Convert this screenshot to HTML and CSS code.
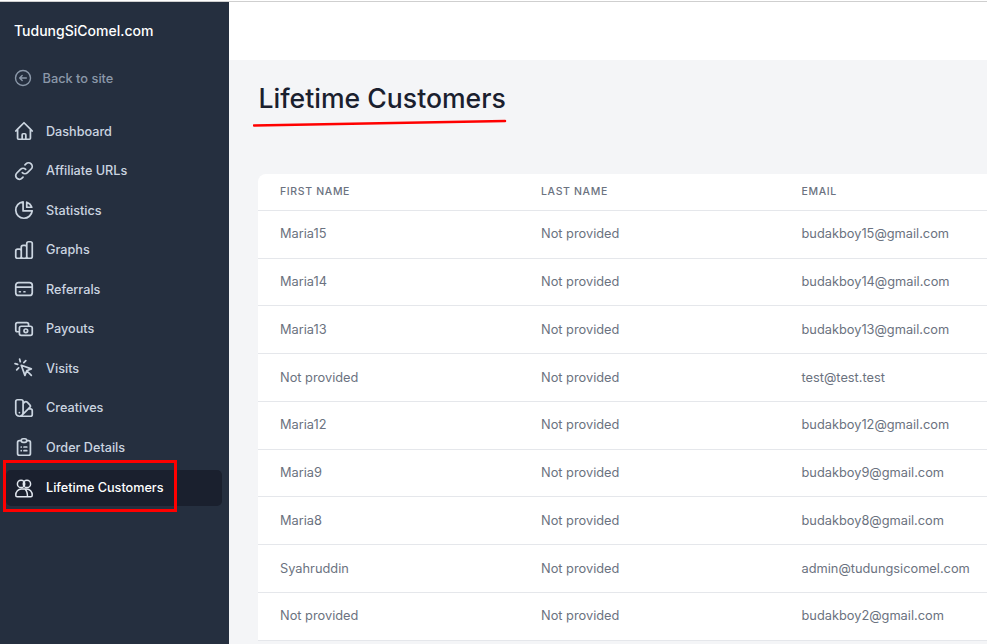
FILE: index.html
```html
<!DOCTYPE html>
<html lang="en">
<head>
<meta charset="utf-8">
<title>Lifetime Customers</title>
<link rel="stylesheet" href="styles.css">
</head>
<body>
<div class="app">
  <aside class="sidebar">
    <div class="brand">TudungSiComel.com</div>
    <a class="back"><svg class="icon back-icon" viewBox="0 0 24 24"><path d="M11 15l-3-3m0 0l3-3m-3 3h8M3 12a9 9 0 1118 0 9 9 0 01-18 0z"/></svg><span>Back to site</span></a>
    <nav class="nav">
      <a class="item"><svg class="icon" viewBox="0 0 24 24"><path d="M3 12l2-2m0 0l7-7 7 7M5 10v10a1 1 0 001 1h3m10-11l2 2m-2-2v10a1 1 0 01-1 1h-3m-6 0a1 1 0 001-1v-4a1 1 0 011-1h2a1 1 0 011 1v4a1 1 0 001 1m-6 0h6"/></svg><span>Dashboard</span></a>
      <a class="item"><svg class="icon" viewBox="0 0 24 24"><path d="M13.828 10.172a4 4 0 00-5.656 0l-4 4a4 4 0 105.656 5.656l1.102-1.101m-.758-4.899a4 4 0 005.656 0l4-4a4 4 0 00-5.656-5.656l-1.100 1.100"/></svg><span>Affiliate URLs</span></a>
      <a class="item"><svg class="icon" viewBox="0 0 24 24"><path d="M11 3.055A9.001 9.001 0 1020.945 13H11V3.055z"/><path d="M20.488 9H15V3.512A9.025 9.025 0 0120.488 9z"/></svg><span>Statistics</span></a>
      <a class="item"><svg class="icon" viewBox="0 0 24 24"><path d="M9 19v-6a2 2 0 00-2-2H5a2 2 0 00-2 2v6a2 2 0 002 2h2a2 2 0 002-2zm0 0V9a2 2 0 012-2h2a2 2 0 012 2v10m-6 0a2 2 0 002 2h2a2 2 0 002-2m0 0V5a2 2 0 012-2h2a2 2 0 012 2v14a2 2 0 01-2 2h-2a2 2 0 01-2-2z"/></svg><span>Graphs</span></a>
      <a class="item"><svg class="icon" viewBox="0 0 24 24"><path d="M3 10h18M7 15h1m4 0h1m-7 4h12a3 3 0 003-3V8a3 3 0 00-3-3H6a3 3 0 00-3 3v8a3 3 0 003 3z"/></svg><span>Referrals</span></a>
      <a class="item"><svg class="icon" viewBox="0 0 24 24"><path d="M17 9V7a2 2 0 00-2-2H5a2 2 0 00-2 2v6a2 2 0 002 2h2m2 4h10a2 2 0 002-2v-6a2 2 0 00-2-2H9a2 2 0 00-2 2v6a2 2 0 002 2zm7-5a2 2 0 11-4 0 2 2 0 014 0z"/></svg><span>Payouts</span></a>
      <a class="item"><svg class="icon" viewBox="0 0 24 24"><path d="M15 15l-2 5L9 9l11 4-5 2zm0 0l5 5M7.188 2.239l.777 2.897M5.136 7.965l-2.898-.777M13.950 4.050l-2.122 2.122m-5.657 5.656l-2.120 2.122"/></svg><span>Visits</span></a>
      <a class="item"><svg class="icon" viewBox="0 0 24 24"><path d="M7 21a4 4 0 01-4-4V5a2 2 0 012-2h4a2 2 0 012 2v12a4 4 0 01-4 4zm0 0h12a2 2 0 002-2v-4a2 2 0 00-2-2h-2.343M11 7.343l1.657-1.657a2 2 0 012.828 0l2.829 2.829a2 2 0 010 2.828l-8.486 8.485M7 17h.01"/></svg><span>Creatives</span></a>
      <a class="item"><svg class="icon" viewBox="0 0 24 24"><path d="M9 5H7a2 2 0 00-2 2v12a2 2 0 002 2h10a2 2 0 002-2V7a2 2 0 00-2-2h-2M9 5a2 2 0 002 2h2a2 2 0 002-2M9 5a2 2 0 012-2h2a2 2 0 012 2m-3 7h3m-3 4h3m-6-4h.01M9 16h.01"/></svg><span>Order Details</span></a>
      <a class="item active"><svg class="icon icon-thin" viewBox="0 0 24 24"><circle cx="8.800" cy="7.500" r="4"/><circle cx="15.200" cy="7.500" r="4"/><path d="M3 19.800c0-3.800 2.800-6.800 6-6.800h6c3.200 0 6 3 6 6.800 0 1-.6 1.700-1.500 1.700h-15c-.9 0-1.500-.7-1.500-1.700zM13.500 13.500c1.700 1.800 2.300 4.500 2.300 8"/></svg><span>Lifetime Customers</span></a>
    </nav>
  </aside>
  <main class="main">
    <div class="topbar"></div>
    <section class="content">
      <h1 class="title">Lifetime Customers</h1>
      <div class="card">
        <table class="table">
          <colgroup><col class="col-first"><col class="col-last"><col></colgroup>
          <thead><tr><th>First name</th><th>Last name</th><th>Email</th></tr></thead>
          <tbody>
            <tr><td>Maria15</td><td>Not provided</td><td>budakboy15@gmail.com</td></tr>
            <tr><td>Maria14</td><td>Not provided</td><td>budakboy14@gmail.com</td></tr>
            <tr><td>Maria13</td><td>Not provided</td><td>budakboy13@gmail.com</td></tr>
            <tr><td>Not provided</td><td>Not provided</td><td>test@test.test</td></tr>
            <tr><td>Maria12</td><td>Not provided</td><td>budakboy12@gmail.com</td></tr>
            <tr><td>Maria9</td><td>Not provided</td><td>budakboy9@gmail.com</td></tr>
            <tr><td>Maria8</td><td>Not provided</td><td>budakboy8@gmail.com</td></tr>
            <tr><td>Syahruddin</td><td>Not provided</td><td>admin@tudungsicomel.com</td></tr>
            <tr><td>Not provided</td><td>Not provided</td><td>budakboy2@gmail.com</td></tr>
          </tbody>
        </table>
      </div>
    </section>
  </main>
</div>
<div class="mark-box"></div>
<svg class="mark-line" viewBox="0 0 256 8"><path d="M1 6.500L254 2"/></svg>
</body>
</html>
```
FILE: styles.css
```css
* { box-sizing: border-box; }
html, body { margin: 0; height: 100%; overflow: hidden; }
body { font-family: Inter, "Liberation Sans", sans-serif; background: #fff; }
.app { display: flex; height: 642px; width: 987px; overflow: hidden; margin-top: 2px; box-shadow: 0 -1px 0 #cfcfcf; }
.sidebar { width: 229px; flex: none; background: #252f3f; padding: 0 7px 0 6px; }
.brand { color: #fff; font-size: 14px; font-weight: 500; line-height: 20px; padding: 19px 0 0 8px; }
.back { display: flex; align-items: center; gap: 10px; margin-top: 27px; padding-left: 6.500px; height: 20px; color: #8b98a9; font-size: 12.800px; font-weight: 500; }
.icon { width: 22px; height: 22px; flex: none; fill: none; stroke: #cbd5e0; stroke-width: 1.900; stroke-linecap: round; stroke-linejoin: round; }
.back-icon { width: 20px; height: 20px; stroke: #8b98a9; stroke-width: 1.700; }
.nav { margin-top: 23.500px; display: flex; flex-direction: column; }
.item { display: flex; align-items: center; gap: 11px; height: 39.500px; padding-left: 7px; border-radius: 5px; color: #cbd5e0; font-size: 12.650px; font-weight: 500; }
.item.active { background: #1a202e; color: #fff; height: 36px; margin-top: 2.750px; }
.item.active .icon { stroke: #e2e8f0; }
.item.active .icon-thin { stroke-width: 1.600; }
.main { flex: 1; min-width: 0; display: flex; flex-direction: column; }
.topbar { height: 58px; background: #fff; flex: none; }
.content { flex: 1; background: #f4f5f7; padding: 0 0 0 29px; }
.title { margin: 0; padding: 21px 0 0 .500px; font-size: 26.600px; line-height: 34px; font-weight: 500; color: #1a202e; }
.card { margin-top: 59px; background: #fff; border-radius: 8px 0 0 0; width: 730px; }
.table { border-collapse: collapse; width: 100%; table-layout: fixed; }
.col-first { width: 261px; }
.col-last { width: 260.500px; }
th { height: 36.250px; padding: 0 0 0 22px; text-align: left; font-size: 10.500px; font-weight: 500; letter-spacing: .65px; color: #6b7280; text-transform: uppercase; border-bottom: 1px solid #e5e7eb; }
td { height: 47.750px; padding: 0 0 .600px 22px; font-size: 12.800px; color: #6b7280; border-bottom: 1px solid #e5e7eb; }
.mark-box { position: absolute; left: 3px; top: 460px; width: 174px; height: 52px; border: 3px solid #ff0000; }
.mark-line { position: absolute; left: 253px; top: 119px; width: 254px; height: 8px; fill: none; stroke: #f00; stroke-width: 2.500; stroke-linecap: round; }
```
